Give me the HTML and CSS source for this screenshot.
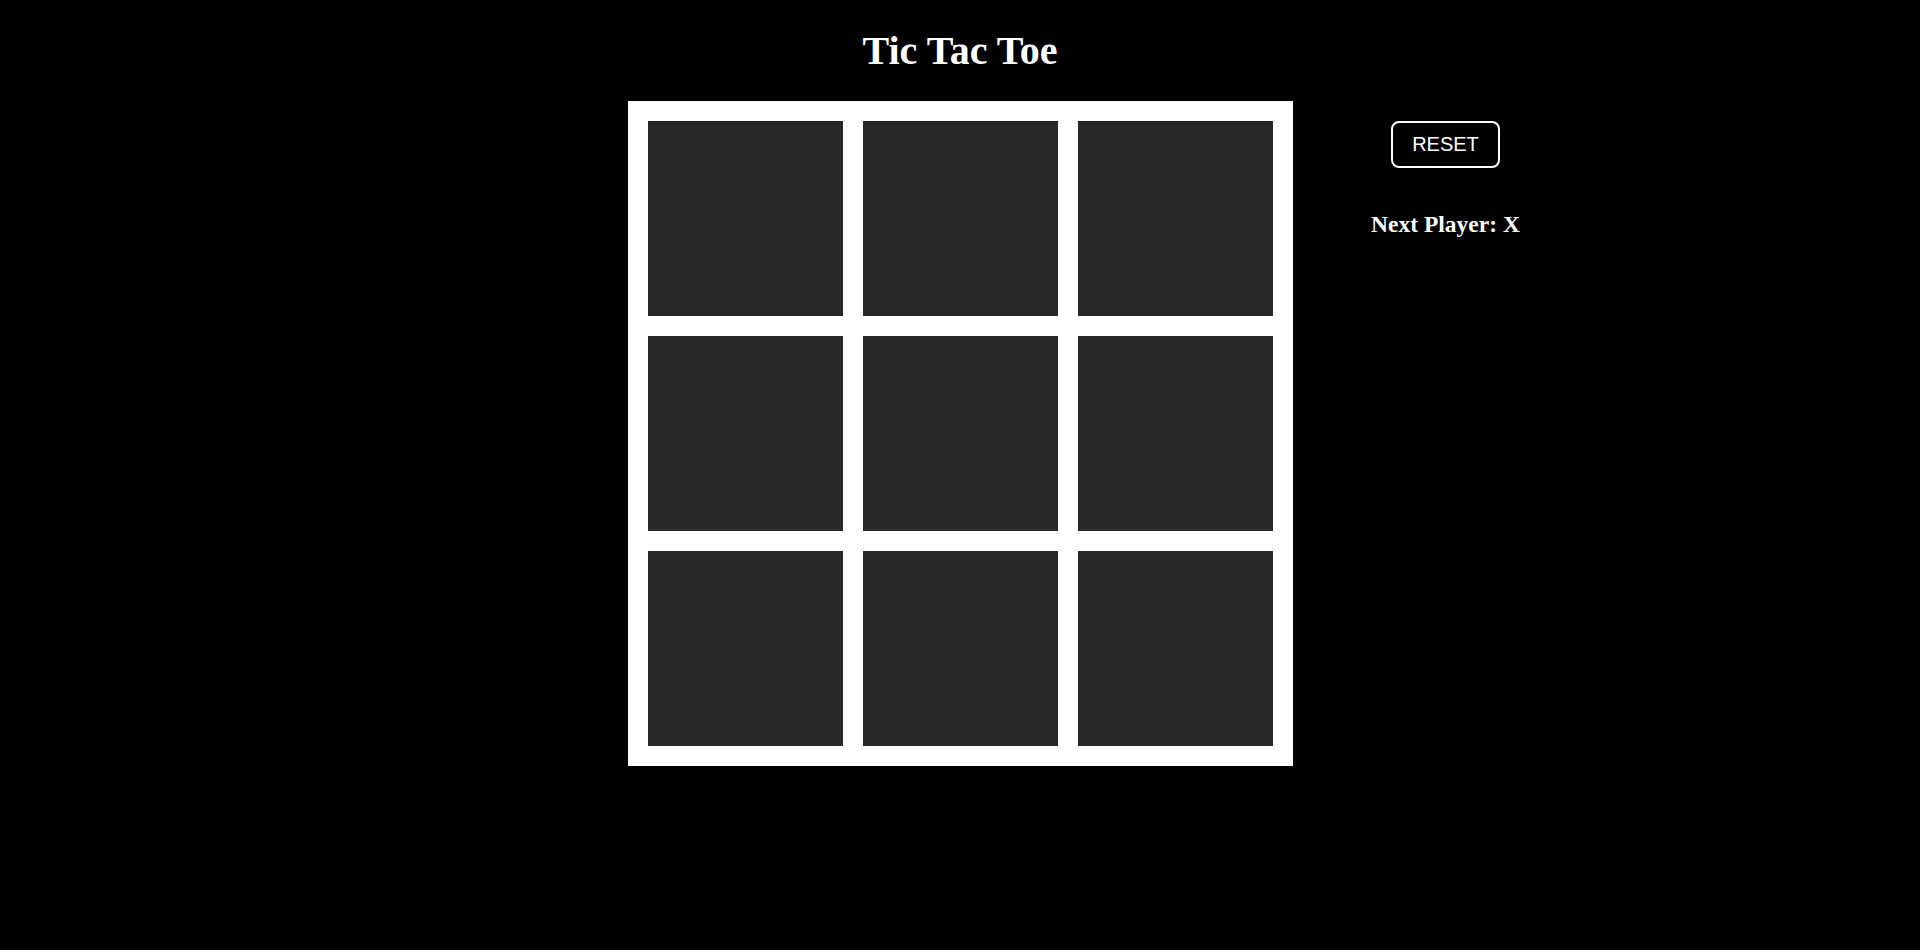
FILE: index.html
```html
<!DOCTYPE html>
<html lang="en">
<head>
<meta charset="utf-8">
<title>Tic Tac Toe</title>
<link rel="stylesheet" href="styles.css">
</head>
<body>
<h1 class="title">Tic Tac Toe</h1>
<div class="game">
  <div class="spacer"></div>
  <div class="board">
    <div class="cell"></div>
    <div class="cell"></div>
    <div class="cell"></div>
    <div class="cell"></div>
    <div class="cell"></div>
    <div class="cell"></div>
    <div class="cell"></div>
    <div class="cell"></div>
    <div class="cell"></div>
  </div>
  <div class="panel">
    <button class="reset">RESET</button>
    <h2 class="status">Next Player: X</h2>
  </div>
</div>
</body>
</html>
```
FILE: styles.css
```css
html, body {
  margin: 0;
  padding: 0;
  background: #000;
  color: #fff;
  font-family: "Liberation Serif", "Times New Roman", serif;
}

.title {
  margin: 28px 0 27px;
  text-align: center;
  font-size: 40px;
  font-weight: bold;
  line-height: 46px;
}

.game {
  display: grid;
  grid-template-columns: 1fr auto 1fr;
  align-items: start;
}

.board {
  display: grid;
  grid-template-columns: repeat(3, 195px);
  grid-template-rows: repeat(3, 195px);
  gap: 20px;
  padding: 20px;
  background: #fff;
}

.cell {
  background: #282828;
}

.panel {
  display: flex;
  flex-direction: column;
  align-items: center;
  width: 148px;
  margin-left: 79px;
  padding-top: 20px;
}

.reset {
  box-sizing: border-box;
  height: 47px;
  padding: 0 19px;
  background: #000;
  color: #fff;
  border: 2px solid #fff;
  border-radius: 8px;
  font-family: "Liberation Sans", Arial, sans-serif;
  font-size: 20px;
  cursor: pointer;
}

.status {
  margin: 43px 0 0;
  font-size: 23.5px;
  font-weight: bold;
  white-space: nowrap;
  line-height: normal;
}
```
